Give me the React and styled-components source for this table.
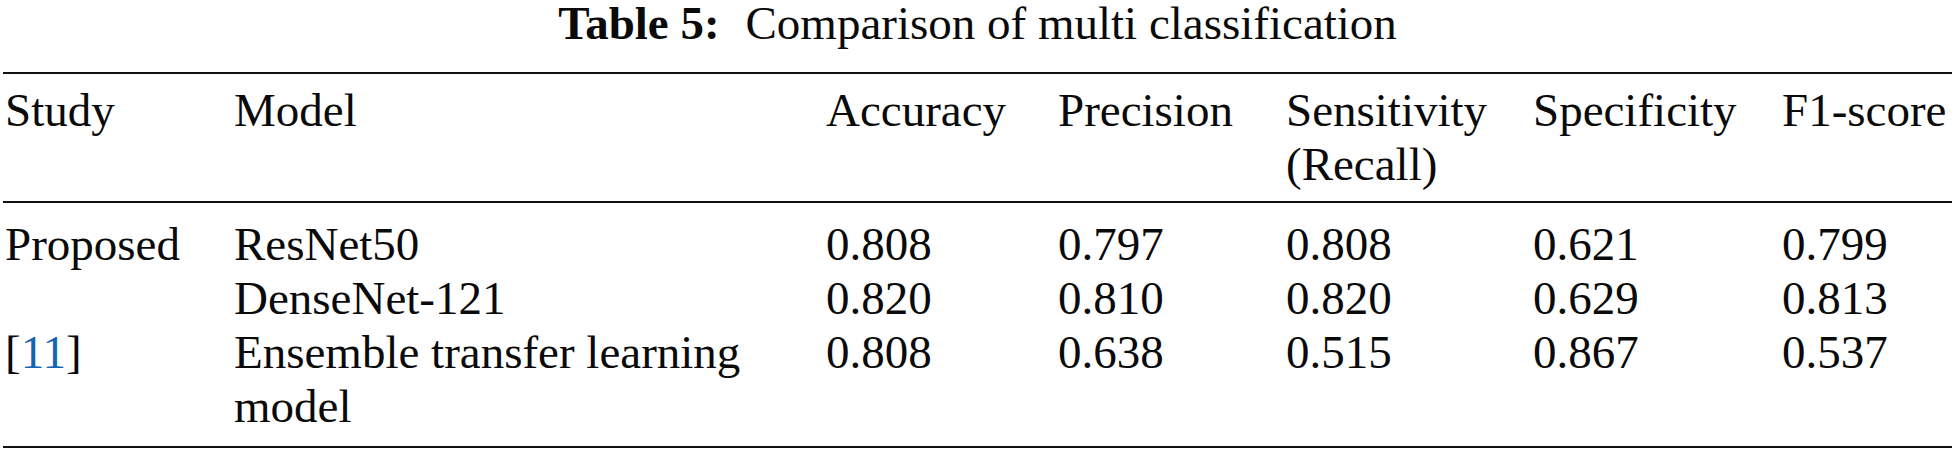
import React from "react";
import styled, { createGlobalStyle } from "styled-components";

const serifStack =
  '"Liberation Serif", LiberationSerif, Tinos, "Times New Roman", Times, "Nimbus Roman", "Nimbus Roman No9 L", "DejaVu Serif", serif';

const GlobalStyle = createGlobalStyle`
  html, body {
    margin: 0;
    padding: 0;
    background: #ffffff;
  }
  body {
    font-family: ${serifStack};
    color: #000;
  }
`;

const Page = styled.div`
  padding: 0 2px 0 3px;
  font-family: ${serifStack};
  font-size: 47px;
  color: #0a0a0a;
`;

const Caption = styled.div`
  text-align: center;
  line-height: 47px;
  margin-bottom: 25px;
  white-space: nowrap;
`;

const CaptionLabel = styled.b`
  font-weight: 700;
  margin-right: 0.55em;
`;

const Section = styled.div`
  display: grid;
  grid-template-columns: 229px 592px 232px 228px 247px 249px 1fr;
  line-height: 54px;
  border-top: ${(p) => (p.$top ? "2px solid #111" : "none")};
  border-bottom: 2px solid #111;
  padding: ${(p) => p.$pad};
`;

const Cell = styled.div`
  padding-left: 2px;
  white-space: ${(p) => (p.$nowrap ? "nowrap" : "normal")};
`;

const Cite = styled.span`
  color: #1464b4;
`;

const header = [
  "Study",
  "Model",
  "Accuracy",
  "Precision",
  "Sensitivity (Recall)",
  "Specificity",
  "F1-score",
];

const rows = [
  {
    study: "Proposed",
    model: "ResNet50",
    values: ["0.808", "0.797", "0.808", "0.621", "0.799"],
  },
  {
    study: "",
    model: "DenseNet-121",
    values: ["0.820", "0.810", "0.820", "0.629", "0.813"],
  },
  {
    study: "cite",
    model: "Ensemble transfer learning model",
    values: ["0.808", "0.638", "0.515", "0.867", "0.537"],
  },
];

export default function App() {
  return (
    <>
      <GlobalStyle />
      <Page>
        <Caption>
          <CaptionLabel>Table 5:</CaptionLabel>Comparison of multi classification
        </Caption>
        <Section $top $pad="9px 0 10px">
          {header.map((h, i) => (
            <Cell key={h} $nowrap={i === header.length - 1}>
              {h}
            </Cell>
          ))}
        </Section>
        <Section $pad="14px 0 13px">
          {rows.map((r, ri) => (
            <React.Fragment key={ri}>
              <Cell>
                {r.study === "cite" ? (
                  <>
                    [<Cite>11</Cite>]
                  </>
                ) : (
                  r.study
                )}
              </Cell>
              <Cell>{r.model}</Cell>
              {r.values.map((v, vi) => (
                <Cell key={vi}>{v}</Cell>
              ))}
            </React.Fragment>
          ))}
        </Section>
      </Page>
    </>
  );
}
